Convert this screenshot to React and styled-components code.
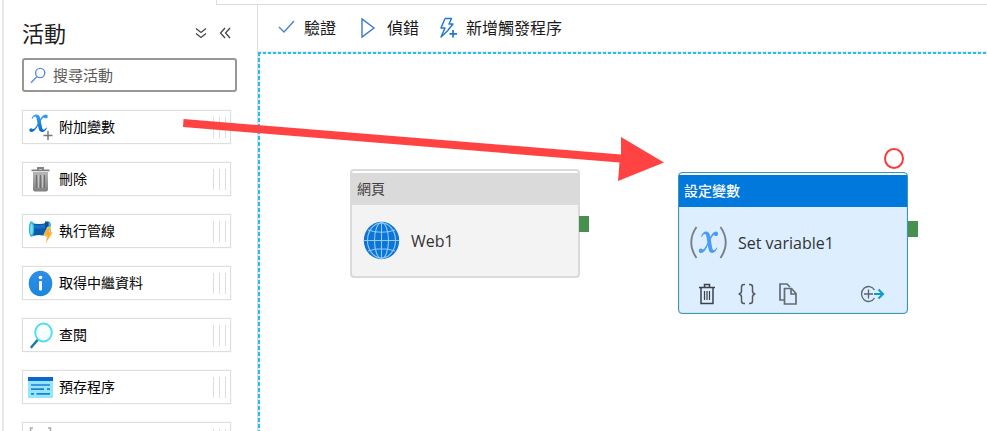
import React from 'react';
import styled, { createGlobalStyle, css } from 'styled-components';

const Global = createGlobalStyle`
  *, *::before, *::after { box-sizing: border-box; }
  body { margin: 0; background: #fff; overflow: hidden; }
  body, button, input {
    font-family: "Open Sans", "Noto Sans CJK TC", sans-serif;
    color: #1f1f1f;
  }
  button { border: 0; background: none; padding: 0; cursor: pointer; }
  svg { display: block; flex: none; }
`;

const Page = styled.div`
  position: relative;
  display: flex;
  flex-direction: column;
  height: 100vh;
  margin-left: 2px;
  border-left: 2px solid #e8e8e8;
  overflow: hidden;
`;

const TabStrip = styled.div`
  display: flex;
  height: 5px;
  flex: none;
`;

const ActiveTab = styled.div`
  width: 213px;
  border-right: 1px solid #dcdcdc;
`;

const TabRest = styled.div`
  flex: 1;
  border-bottom: 1px solid #dcdcdc;
`;

const Workspace = styled.div`
  display: flex;
  flex: 1;
  min-height: 0;
`;

const Sidebar = styled.aside`
  display: flex;
  flex-direction: column;
  flex: none;
  width: 254px;
  padding: 13px 20px 0 18px;
  border-right: 1px solid #dcdcdc;
  overflow: hidden;
`;

const SidebarHeader = styled.header`
  display: flex;
  align-items: center;
  justify-content: space-between;
  flex: none;
  height: 30px;
  padding-right: 6px;
`;

const Title = styled.h1`
  margin: 0;
  font-size: 22px;
  line-height: 30px;
  font-weight: 400;
`;

const HeaderTools = styled.div`
  display: flex;
  gap: 12px;
`;

const IconButton = styled.button`
  display: grid;
  place-items: center;
`;

const Search = styled.label`
  display: flex;
  align-items: center;
  flex: none;
  gap: 7px;
  height: 34px;
  margin-top: 10px;
  padding: 0 6px;
  border: 2px solid #999795;
  border-radius: 3px;
`;

const SearchInput = styled.input`
  flex: 1;
  min-width: 0;
  padding: 0;
  border: 0;
  outline: 0;
  font-size: 15px;
  line-height: 22px;
  &::placeholder { color: #5c5a58; opacity: 1; }
`;

const ActivityList = styled.ul`
  display: flex;
  flex-direction: column;
  gap: 18px;
  margin: 18px 6px 0 0;
  padding: 0;
  list-style: none;
`;

const ActivityRow = styled.li`
  display: flex;
  align-items: center;
  flex: none;
  gap: 6px;
  height: 34px;
  padding: 0 3px 0 5px;
  border: 1px solid #dedede;
  box-shadow: 0 0 1px #dedede;
  font-size: 14px;
  line-height: 20px;
  color: #000;
`;

const Grip = styled.span`
  width: 14px;
  height: 21px;
  margin-left: auto;
  background: repeating-linear-gradient(to right, #dedede 0 1px, transparent 1px 6px);
`;

const Main = styled.main`
  display: flex;
  flex-direction: column;
  flex: 1;
  min-width: 0;
`;

const Toolbar = styled.div`
  display: flex;
  align-items: center;
  gap: 20px;
  height: 47px;
  padding: 0 0 1px 19px;
  border-bottom: 1px solid #ececec;
`;

const ToolButton = styled.button`
  display: flex;
  align-items: center;
  gap: 8px;
  font-size: 16px;
  line-height: 24px;
  color: #1a1a1a;
`;

const Canvas = styled.section`
  position: relative;
  flex: 1;
  background:
    repeating-linear-gradient(to right, #27bdec 0 3px, #d6f3fc 3px 5px) 0 0 / 100% 2px no-repeat,
    repeating-linear-gradient(to bottom, #27bdec 0 4px, #d6f3fc 4px 6px) 0 0 / 2px 100% no-repeat;
`;

const Node = styled.article`
  position: absolute;
  left: ${p => p.$x}px;
  top: ${p => p.$y}px;
  width: 230px;
  padding-top: 2px;
  border: 2px solid #dadada;
  border-radius: 4px;
  background: linear-gradient(#fff 0 4px, #f3f3f3 4px);
  ${p => p.$selected && css`
    border: 1px solid #3d97ae;
    box-shadow: inset 0 0 1px #3d97ae;
    background: linear-gradient(#fff 0 4px, #dceeff 4px);
  `}
`;

const NodeHeader = styled.header`
  height: 32px;
  padding: 0 5px;
  font-size: 14px;
  line-height: 31px;
  background: ${p => (p.$selected ? '#0078dc' : '#dadada')};
  color: ${p => (p.$selected ? '#fff' : '#404040')};
  font-weight: ${p => (p.$selected ? 500 : 400)};
`;

const NodeBody = styled.div`
  display: flex;
  align-items: center;
  gap: 11px;
  height: 71px;
  padding: 0 11px;
  font-size: 16px;
  line-height: 24px;
  color: #333;
`;

const NodeActions = styled.footer`
  display: flex;
  align-items: center;
  gap: 21px;
  height: 35px;
  padding: 0 22px 4px 19px;
`;

const PushedRight = styled(IconButton)`
  margin-left: auto;
`;

const OutputPort = styled.span`
  position: absolute;
  left: calc(100% + 1px);
  top: ${p => p.$y}px;
  width: 10px;
  height: 16px;
  background: #47904f;
`;

const Breakpoint = styled.button`
  position: absolute;
  right: 3px;
  bottom: calc(100% + 4px);
  width: 20px;
  height: 21px;
  border: 2px solid #fb3a3a;
  border-radius: 50%;
`;

const Pointer = styled.svg`
  position: absolute;
  left: 178px;
  top: 116px;
  pointer-events: none;
`;

const VariableGlyph = ({ color }) => (
  <g fill={color}>
    <path d="M2.500 4.600C3.600 1.700 5.200.5 7.300.5c2.300 0 3.400 1.300 3.900 3.700l1.900 9.300c.3 1.500.9 2.200 1.700 2.200.8 0 1.600-.8 2.400-2.200l.8.500c-1.400 2.800-2.900 4-4.700 4-2.100 0-3.200-1.200-3.700-3.500L7.700 5C7.400 3.400 6.900 2.500 5.900 2.500c-.9 0-1.700.8-2.500 2.400z" />
    <path d="M9.600 8.300C12 3.300 14.200.5 16.600.5c1.300 0 2.200.7 2.200 1.900 0 1.100-.8 1.800-1.900 1.800-.9 0-1.300-.8-2-.8-1.100 0-2.600 2-4.800 6.500z" />
    <path d="M9.800 10.100C7.400 15.200 5 18 2.600 18 1.300 18 .3 17.300.3 16.100c0-1.100.9-1.800 1.900-1.800.9 0 1.300.8 2 .8 1.200 0 2.900-2.300 5.100-6.700z" />
  </g>
);

const AppendIcon = () => (
  <svg width="25" height="29" viewBox="0 0 25 29">
    <defs>
      <linearGradient id="append" gradientUnits="userSpaceOnUse" x1="0" y1="0" x2="0" y2="18">
        <stop offset="0" stopColor="#3aa2f6" /><stop offset="1" stopColor="#0b68c9" />
      </linearGradient>
    </defs>
    <g transform="translate(1 1)"><VariableGlyph color="url(#append)" /></g>
    <path d="M20 18v9M15.500 22.500h9" stroke="#777" strokeWidth="1.500" />
  </svg>
);

const DeleteIcon = () => (
  <svg width="25" height="25" viewBox="0 0 25 25">
    <defs>
      <linearGradient id="bin" x1="0" y1="0" x2="0" y2="1">
        <stop offset="0" stopColor="#b8b8b8" /><stop offset="1" stopColor="#808080" />
      </linearGradient>
    </defs>
    <path d="M5 5h15v17.500a2 2 0 0 1-2 2H7a2 2 0 0 1-2-2z" fill="url(#bin)" />
    <path d="M3.500 3.300h18M10 2.500V1h5v1.500" stroke="#808080" strokeWidth="1.800" fill="none" />
    <path d="M8.500 8v13M12.500 8v13M16.500 8v13" stroke="#707070" strokeWidth="1.200" />
    <path d="M10.500 8v13M14.500 8v13" stroke="#d0d0d0" strokeWidth=".8" />
  </svg>
);

const PipelineIcon = () => (
  <svg width="25" height="25" viewBox="0 0 25 25">
    <path d="M3 3.500q8 3 16 0v14q-8-3-16 0z" fill="#0d5aa8" />
    <path d="M4 5q7 2.500 14 0v4q-7 1.500-14 0z" fill="#1673c5" />
    <ellipse cx="3.500" cy="10" rx="2.700" ry="7.700" fill="#32b8d8" />
    <ellipse cx="3.500" cy="10" rx="1.300" ry="5.500" fill="#7fdcf0" />
    <path d="M17 2.500h3q2.500 0 2.500 3V17h-5.500z" fill="#0c4f98" />
    <path d="M20.500 3q2 0 2 3v11h-1.500z" fill="#39bdd8" />
    <path d="M19.500 8h4l-2.300 5H25l-7.500 12 1.500-8.300h-3.500z" fill="#ffac20" stroke="#fff" strokeWidth=".5" />
  </svg>
);

const InfoIcon = () => (
  <svg width="25" height="27" viewBox="0 0 25 27">
    <defs>
      <linearGradient id="info" x1="0" y1="0" x2="0" y2="1">
        <stop offset="0" stopColor="#2f8ee6" /><stop offset="1" stopColor="#1b86dd" />
      </linearGradient>
    </defs>
    <ellipse cx="12.500" cy="13.500" rx="11.800" ry="12.800" fill="url(#info)" />
    <circle cx="12.500" cy="7.500" r="1.800" fill="#fff" />
    <rect x="11" y="11" width="3" height="9.500" rx="1" fill="#fff" />
  </svg>
);

const LookupIcon = () => (
  <svg width="25" height="27" viewBox="0 0 25 27">
    <path d="M10 17.500 3.500 25" stroke="#1b7ea6" strokeWidth="2.600" strokeLinecap="round" />
    <ellipse cx="15.500" cy="10.500" rx="8.300" ry="9" fill="#f6feff" stroke="#50dcf5" strokeWidth="1.900" />
  </svg>
);

const ProcedureIcon = () => (
  <svg width="25" height="21" viewBox="0 0 25 21">
    <path d="M0 0h25v21H0z" fill="#94e6fc" />
    <path d="M0 0h25v4H0z" fill="#0b66cf" />
    <path d="M3 8h19M3 12.200h13M19 12.200h3M3 16.800h3M8.500 16.800H22" stroke="#237fce" strokeWidth="1.700" />
  </svg>
);

const ForEachIcon = () => (
  <svg width="25" height="25" viewBox="0 0 25 25">
    <path d="M5 1H2.500v22H5M20 1h2.500v22H20" fill="none" stroke="#aaa" strokeWidth="1.500" />
  </svg>
);

const Chevrons = ({ turned }) => (
  <svg width="12" height="12" viewBox="0 0 12 12" fill="none" stroke="#444" strokeWidth="1.300">
    {turned
      ? <path d="M6 1 1.500 6 6 11M11 1 6.500 6 11 11" />
      : <path d="M1 1.500 6 5.500l5-4M1 6.500l5 4 5-4" />}
  </svg>
);

const SearchIcon = () => (
  <svg width="16" height="17" viewBox="0 0 16 17" fill="none" stroke="#5b8fdf" strokeWidth="1.400">
    <circle cx="10.200" cy="6" r="4.600" /><path d="M7 9.500 1 15.800" />
  </svg>
);

const CheckIcon = () => (
  <svg width="19" height="16" viewBox="0 0 19 16" fill="none" stroke="#4a82d2" strokeWidth="1.400">
    <path d="m2 7 5 5L17 1" />
  </svg>
);

const PlayIcon = () => (
  <svg width="23" height="22" viewBox="0 0 23 22" fill="none" stroke="#3a7ad2" strokeWidth="1.400">
    <path d="M6 2v18l12-9z" />
  </svg>
);

const TriggerIcon = () => (
  <svg width="19" height="22" viewBox="0 0 19 22" fill="none" stroke="#1d78cf" strokeWidth="1.400">
    <path d="M6 1.500h6.500L10 7h4L9 13M6 1.500 2 11h4L2 20 9.500 13" strokeLinejoin="round" />
    <path d="M14 13v7.500M10.500 16.800H18" strokeWidth="1.700" />
  </svg>
);

const GlobeIcon = () => (
  <svg width="37" height="39" viewBox="0 0 37 39">
    <ellipse cx="18.500" cy="19.500" rx="17.700" ry="18.800" fill="#0d75d4" />
    <g fill="none" stroke="#8fc9ff" strokeWidth="1.100">
      <ellipse cx="18.500" cy="19.500" rx="7" ry="18" />
      <ellipse cx="18.500" cy="19.500" rx="14" ry="17.500" />
      <path d="M18.500 1v37M1 19.500h35M5 9q13.500 4.500 27 0M5 30q13.500-4.500 27 0" />
    </g>
  </svg>
);

const SetVariableIcon = () => (
  <svg width="37" height="33" viewBox="0 0 37 33">
    <path d="M6.500 1q-10.500 15 0 31M30.500 1q10.500 15 0 31" fill="none" stroke="#7c7f83" strokeWidth="1.900" />
    <g transform="translate(8.500 5) scale(1.040 1.220)"><VariableGlyph color="#4b9bf6" /></g>
  </svg>
);

const BinIcon = () => (
  <svg width="18" height="22" viewBox="0 0 18 22" fill="none" stroke="#3c4248" strokeWidth="1.500">
    <path d="M1 4.500h16M6.500 4V1.500h5V4M3 5v15.500h12V5" />
    <path d="M6.500 8v9M9 8v9M11.500 8v9" strokeWidth="1.200" />
  </svg>
);

const BracesIcon = () => (
  <svg width="20" height="22" viewBox="0 0 20 22" fill="none" stroke="#555b60" strokeWidth="1.500">
    <path d="M8 1.500H7Q4.500 1.500 4.500 4v4q0 2.500-2.800 3 2.800.5 2.800 3v4q0 2.500 2.500 2.500h1M12 1.500h1q2.500 0 2.500 2.500v4q0 2.500 2.800 3-2.800.5-2.800 3v4q0 2.500-2.500 2.500h-1" />
  </svg>
);

const CopyIcon = () => (
  <svg width="20" height="22" viewBox="0 0 20 22" fill="none" stroke="#666c72" strokeWidth="1.700">
    <path d="M6 17H2V1h7l3 3" />
    <path d="M6.500 5.500h7l4.500 5v10.500H6.500zM13 6v5h5" />
  </svg>
);

const AddOutputIcon = () => (
  <svg width="25" height="18" viewBox="0 0 25 18" fill="none">
    <path d="M14.500 5A7 7.500 0 1 0 14.500 13M8.500 4.500v9M4 9h9" stroke="#596570" strokeWidth="1.300" />
    <path d="M14 9h9M18.500 4.500 23 9l-4.500 4.500" stroke="#109bc6" strokeWidth="2" />
  </svg>
);

const activities = [
  ['附加變數', AppendIcon],
  ['刪除', DeleteIcon],
  ['執行管線', PipelineIcon],
  ['取得中繼資料', InfoIcon],
  ['查閱', LookupIcon],
  ['預存程序', ProcedureIcon],
  ['', ForEachIcon],
];

export default function App() {
  return (
    <Page>
      <Global />
      <TabStrip><ActiveTab /><TabRest /></TabStrip>
      <Workspace>
        <Sidebar>
          <SidebarHeader>
            <Title>活動</Title>
            <HeaderTools>
              <IconButton aria-label="全部展開"><Chevrons /></IconButton>
              <IconButton aria-label="摺疊"><Chevrons turned /></IconButton>
            </HeaderTools>
          </SidebarHeader>
          <Search>
            <SearchIcon />
            <SearchInput type="text" placeholder="搜尋活動" aria-label="搜尋活動" />
          </Search>
          <ActivityList>
            {activities.map(([name, Icon], i) => (
              <ActivityRow key={i}><Icon />{name}<Grip /></ActivityRow>
            ))}
          </ActivityList>
        </Sidebar>
        <Main>
          <Toolbar>
            <ToolButton><CheckIcon />驗證</ToolButton>
            <ToolButton><PlayIcon />偵錯</ToolButton>
            <ToolButton><TriggerIcon />新增觸發程序</ToolButton>
          </Toolbar>
          <Canvas>
            <Node $x={92} $y={117}>
              <NodeHeader>網頁</NodeHeader>
              <NodeBody><GlobeIcon />Web1</NodeBody>
              <OutputPort $y={45} />
            </Node>
            <Node $x={420} $y={120} $selected>
              <NodeHeader $selected>設定變數</NodeHeader>
              <NodeBody><SetVariableIcon />Set variable1</NodeBody>
              <NodeActions>
                <IconButton aria-label="刪除"><BinIcon /></IconButton>
                <IconButton aria-label="程式碼"><BracesIcon /></IconButton>
                <IconButton aria-label="複製"><CopyIcon /></IconButton>
                <PushedRight aria-label="新增輸出"><AddOutputIcon /></PushedRight>
              </NodeActions>
              <OutputPort $y={48} />
              <Breakpoint aria-label="中斷點" />
            </Node>
          </Canvas>
        </Main>
      </Workspace>
      <Pointer width="484" height="66" viewBox="182 116 484 66" aria-hidden="true">
        <path d="M183.500 119 621 154.500V137l43 25.500-46 18.500 1.500-18.500L183 127z" fill="#ff4343" />
      </Pointer>
    </Page>
  );
}
